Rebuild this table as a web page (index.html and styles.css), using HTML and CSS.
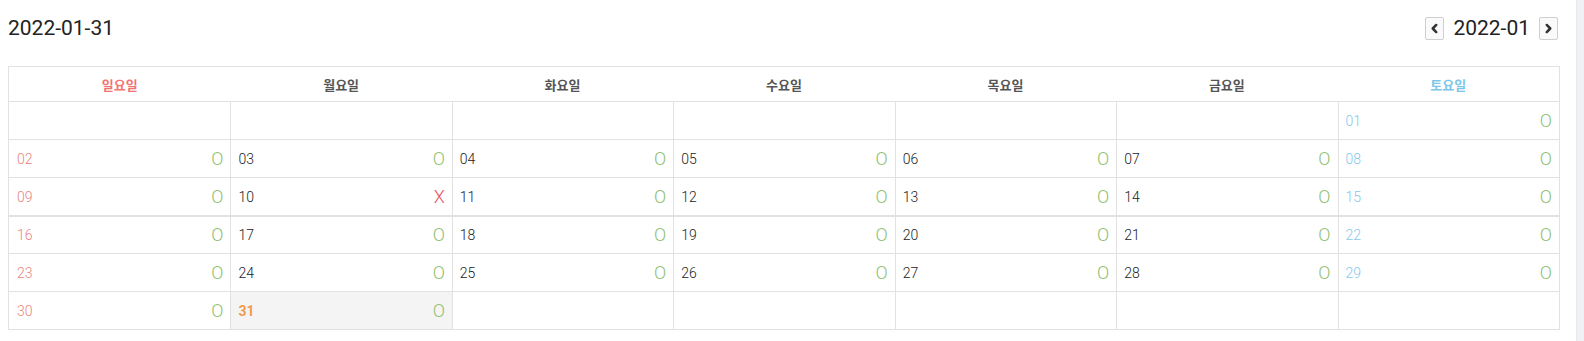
FILE: index.html
```html
<!DOCTYPE html>
<html lang="ko">
<head>
<meta charset="utf-8">
<title>Calendar</title>
<link rel="stylesheet" href="styles.css">
</head>
<body>
<div class="shell">
  <main class="page">
    <header class="topbar">
      <h1 class="title">2022-01-31</h1>
      <div class="month-nav">
        <button class="nav-btn" type="button" aria-label="이전 달">
          <svg viewBox="0 0 10 10" width="11" height="11"><path d="M6.6 1.8 L3.4 5 L6.6 8.2" fill="none" stroke="#333" stroke-width="2.3" stroke-linecap="round" stroke-linejoin="round"/></svg>
        </button>
        <span class="month">2022-01</span>
        <button class="nav-btn" type="button" aria-label="다음 달">
          <svg viewBox="0 0 10 10" width="11" height="11"><path d="M3.4 1.8 L6.6 5 L3.4 8.2" fill="none" stroke="#333" stroke-width="2.3" stroke-linecap="round" stroke-linejoin="round"/></svg>
        </button>
      </div>
    </header>

    <section class="calendar">
      <div class="weekdays">
        <div class="wd sun">일요일</div>
        <div class="wd">월요일</div>
        <div class="wd">화요일</div>
        <div class="wd">수요일</div>
        <div class="wd">목요일</div>
        <div class="wd">금요일</div>
        <div class="wd sat">토요일</div>
      </div>

      <div class="week">
        <div class="day"></div><div class="day"></div><div class="day"></div><div class="day"></div><div class="day"></div><div class="day"></div>
        <div class="day sat"><span class="num">01</span><span class="mark ok">O</span></div>
      </div>
      <div class="week">
        <div class="day sun"><span class="num">02</span><span class="mark ok">O</span></div>
        <div class="day"><span class="num">03</span><span class="mark ok">O</span></div>
        <div class="day"><span class="num">04</span><span class="mark ok">O</span></div>
        <div class="day"><span class="num">05</span><span class="mark ok">O</span></div>
        <div class="day"><span class="num">06</span><span class="mark ok">O</span></div>
        <div class="day"><span class="num">07</span><span class="mark ok">O</span></div>
        <div class="day sat"><span class="num">08</span><span class="mark ok">O</span></div>
      </div>
      <div class="week">
        <div class="day sun"><span class="num">09</span><span class="mark ok">O</span></div>
        <div class="day"><span class="num">10</span><span class="mark no">X</span></div>
        <div class="day"><span class="num">11</span><span class="mark ok">O</span></div>
        <div class="day"><span class="num">12</span><span class="mark ok">O</span></div>
        <div class="day"><span class="num">13</span><span class="mark ok">O</span></div>
        <div class="day"><span class="num">14</span><span class="mark ok">O</span></div>
        <div class="day sat"><span class="num">15</span><span class="mark ok">O</span></div>
      </div>
      <div class="week week-split">
        <div class="day sun"><span class="num">16</span><span class="mark ok">O</span></div>
        <div class="day"><span class="num">17</span><span class="mark ok">O</span></div>
        <div class="day"><span class="num">18</span><span class="mark ok">O</span></div>
        <div class="day"><span class="num">19</span><span class="mark ok">O</span></div>
        <div class="day"><span class="num">20</span><span class="mark ok">O</span></div>
        <div class="day"><span class="num">21</span><span class="mark ok">O</span></div>
        <div class="day sat"><span class="num">22</span><span class="mark ok">O</span></div>
      </div>
      <div class="week">
        <div class="day sun"><span class="num">23</span><span class="mark ok">O</span></div>
        <div class="day"><span class="num">24</span><span class="mark ok">O</span></div>
        <div class="day"><span class="num">25</span><span class="mark ok">O</span></div>
        <div class="day"><span class="num">26</span><span class="mark ok">O</span></div>
        <div class="day"><span class="num">27</span><span class="mark ok">O</span></div>
        <div class="day"><span class="num">28</span><span class="mark ok">O</span></div>
        <div class="day sat"><span class="num">29</span><span class="mark ok">O</span></div>
      </div>
      <div class="week last">
        <div class="day sun"><span class="num">30</span><span class="mark ok">O</span></div>
        <div class="day today"><span class="num">31</span><span class="mark ok">O</span></div>
        <div class="day"></div><div class="day"></div><div class="day"></div><div class="day"></div><div class="day"></div>
      </div>
    </section>
  </main>
  <div class="scrollbar"></div>
</div>
</body>
</html>
```

FILE: styles.css
```css
* { box-sizing: border-box; }

html, body {
  margin: 0;
  padding: 0;
  background: #ffffff;
  font-family: Roboto, "Noto Sans CJK KR", "Noto Sans", sans-serif;
  color: #333;
}

.shell {
  display: flex;
  width: 1584px;
  height: 341px;
  overflow: hidden;
}

.page {
  flex: 1;
  padding: 16px 16px 0 8px;
}

.scrollbar {
  width: 8px;
  background: #f0f1f4;
  border-left: 1px solid #e8e9ed;
}

.topbar {
  display: flex;
  align-items: center;
  justify-content: space-between;
  height: 24px;
  margin-bottom: 26px;
  padding-right: 2px;
}

.title {
  margin: 0;
  font-size: 21px;
  font-weight: 400;
  line-height: 24px;
  color: #222;
}

.month-nav {
  display: flex;
  align-items: center;
  gap: 8px;
}

.month {
  font-size: 21px;
  line-height: 24px;
  color: #222;
  margin: 0 1px;
}

.nav-btn {
  width: 19px;
  height: 23px;
  padding: 0;
  display: flex;
  align-items: center;
  justify-content: center;
  background: #fafafa;
  border: 1px solid #cfcfcf;
  border-radius: 2px;
}

.calendar {
  border: 1px solid #e2e2e2;
  border-bottom: 0;
}

.weekdays {
  display: grid;
  grid-template-columns: repeat(7, 1fr);
  height: 35px;
  border-bottom: 1px solid #e2e2e2;
}

.wd {
  display: flex;
  align-items: center;
  justify-content: center;
  font-size: 13px;
  font-weight: 700;
  color: #555;
}

.wd.sun { color: #f07474; }
.wd.sat { color: #7cc6ea; }

.week {
  display: grid;
  grid-template-columns: repeat(7, 1fr);
  height: 38px;
  border-bottom: 1px solid #e2e2e2;
}

.week-split {
  border-top: 1px solid #e2e2e2;
}

.day {
  display: flex;
  align-items: center;
  justify-content: space-between;
  padding: 0 7px 0 7px;
  border-left: 1px solid #e2e2e2;
}

.day:first-child { border-left: 0; padding-left: 8px; }

.num {
  font-size: 14px;
  font-weight: 300;
  color: #222;
}

.day.sun .num { color: #e98484; }
.day.sat .num { color: #86c8ec; }

.day.today { background: #f4f4f4; }
.day.today .num { color: #f29a4e; font-weight: 700; }

.mark {
  font-size: 18px;
  font-weight: 300;
  line-height: 1;
}

.mark.ok { color: #8fc070; }
.mark.no { color: #e2535f; }
```
